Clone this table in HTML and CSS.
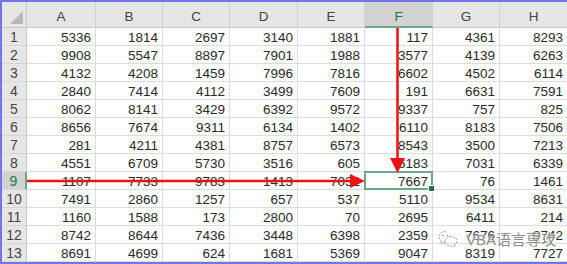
FILE: index.html
```html
<!DOCTYPE html>
<html lang="en">

<head>
    <meta charset="UTF-8">
    <meta name="viewport" content="width=device-width, initial-scale=1.0">
    <title>Sheet</title>
    <link rel="stylesheet" href="styles.css">
</head>

<body>
    <div class="frame">
        <div class="sheet">
            <!-- Column headers -->
            <div class="corner"><span class="corner-mark"></span></div>
            <div class="col-head">A</div>
            <div class="col-head">B</div>
            <div class="col-head">C</div>
            <div class="col-head">D</div>
            <div class="col-head">E</div>
            <div class="col-head active-col">F</div>
            <div class="col-head">G</div>
            <div class="col-head">H</div>

            <div class="row-head">1</div>
            <div class="cell">5336</div><div class="cell">1814</div><div class="cell">2697</div><div class="cell">3140</div><div class="cell">1881</div><div class="cell">117</div><div class="cell">4361</div><div class="cell">8293</div>

            <div class="row-head">2</div>
            <div class="cell">9908</div><div class="cell">5547</div><div class="cell">8897</div><div class="cell">7901</div><div class="cell">1988</div><div class="cell">3577</div><div class="cell">4139</div><div class="cell">6263</div>

            <div class="row-head">3</div>
            <div class="cell">4132</div><div class="cell">4208</div><div class="cell">1459</div><div class="cell">7996</div><div class="cell">7816</div><div class="cell">6602</div><div class="cell">4502</div><div class="cell">6114</div>

            <div class="row-head">4</div>
            <div class="cell">2840</div><div class="cell">7414</div><div class="cell">4112</div><div class="cell">3499</div><div class="cell">7609</div><div class="cell">191</div><div class="cell">6631</div><div class="cell">7591</div>

            <div class="row-head">5</div>
            <div class="cell">8062</div><div class="cell">8141</div><div class="cell">3429</div><div class="cell">6392</div><div class="cell">9572</div><div class="cell">9337</div><div class="cell">757</div><div class="cell">825</div>

            <div class="row-head">6</div>
            <div class="cell">8656</div><div class="cell">7674</div><div class="cell">9311</div><div class="cell">6134</div><div class="cell">1402</div><div class="cell">6110</div><div class="cell">8183</div><div class="cell">7506</div>

            <div class="row-head">7</div>
            <div class="cell">281</div><div class="cell">4211</div><div class="cell">4381</div><div class="cell">8757</div><div class="cell">6573</div><div class="cell">8543</div><div class="cell">3500</div><div class="cell">7213</div>

            <div class="row-head">8</div>
            <div class="cell">4551</div><div class="cell">6709</div><div class="cell">5730</div><div class="cell">3516</div><div class="cell">605</div><div class="cell">6183</div><div class="cell">7031</div><div class="cell">6339</div>

            <div class="row-head active-row">9</div>
            <div class="cell">1107</div><div class="cell">7733</div><div class="cell">9783</div><div class="cell">1413</div><div class="cell">7032</div><div class="cell active-cell">7667</div><div class="cell">76</div><div class="cell">1461</div>

            <div class="row-head">10</div>
            <div class="cell">7491</div><div class="cell">2860</div><div class="cell">1257</div><div class="cell">657</div><div class="cell">537</div><div class="cell">5110</div><div class="cell">9534</div><div class="cell">8631</div>

            <div class="row-head">11</div>
            <div class="cell">1160</div><div class="cell">1588</div><div class="cell">173</div><div class="cell">2800</div><div class="cell">70</div><div class="cell">2695</div><div class="cell">6411</div><div class="cell">214</div>

            <div class="row-head">12</div>
            <div class="cell">8742</div><div class="cell">8644</div><div class="cell">7436</div><div class="cell">3448</div><div class="cell">6398</div><div class="cell">2359</div><div class="cell">7676</div><div class="cell">9742</div>

            <div class="row-head">13</div>
            <div class="cell">8691</div><div class="cell">4699</div><div class="cell">624</div><div class="cell">1681</div><div class="cell">5369</div><div class="cell">9047</div><div class="cell">8319</div><div class="cell">7727</div>
        </div>

        <!-- Red arrows drawn over the sheet -->
        <svg class="arrows" width="567" height="264" viewBox="0 0 567 264">
            <line x1="397.5" y1="28" x2="397.5" y2="160" stroke="#f01010" stroke-width="2.5" />
            <polygon points="390,158 405,158 397.5,173" fill="#f01010" />
            <line x1="27" y1="181" x2="352" y2="181" stroke="#f01010" stroke-width="2.5" />
            <polygon points="350,174 350,188 365,181" fill="#f01010" />
        </svg>

        <!-- Watermark -->
        <div class="watermark">
            <svg class="wm-icon" width="20" height="18" viewBox="0 0 20 18">
                <path d="M7.5 1.5C3.9 1.5 1 3.9 1 6.9c0 1.7 0.9 3.1 2.3 4.1L2.8 13l2.3-1.2c0.8 0.2 1.5 0.3 2.4 0.3"
                    fill="none" stroke="#9a9a9a" stroke-width="1" stroke-dasharray="2 1.2" />
                <path d="M13 6.5c-3.3 0-6 2.1-6 4.8s2.7 4.8 6 4.8c0.7 0 1.3-0.1 1.9-0.3l1.9 1-0.4-1.7c1.5-0.9 2.5-2.3 2.5-3.8 0-2.7-2.7-4.8-5.9-4.8z"
                    fill="none" stroke="#9a9a9a" stroke-width="1" stroke-dasharray="2 1.2" />
                <circle cx="5" cy="5.5" r="0.8" fill="#9a9a9a" />
                <circle cx="9.5" cy="5.5" r="0.8" fill="#9a9a9a" />
            </svg>
            <span class="wm-text">VBA语言専攻</span>
        </div>
    </div>
</body>

</html>
```

FILE: styles.css
```css
/* Page frame with the blue edge of the screenshot */
body {
    margin: 0;
    background: #ffffff;
    font-family: "Liberation Sans", Arial, sans-serif;
}

.frame {
    position: relative;
    width: 567px;
    height: 264px;
    overflow: hidden;
    box-sizing: border-box;
    border-top: 2px solid #7474ec;
    border-left: 2px solid #7474ec;
    border-bottom: 2px solid #7474ec;
}

/* Spreadsheet grid */
.sheet {
    display: grid;
    grid-template-columns: 25px 69px 67px 67px 68px 67px 68px 67px 68px;
    grid-template-rows: 26px repeat(13, 18px);
    font-size: 13.5px;
}

.corner,
.col-head,
.row-head {
    background: #e6e6e6;
    color: #444;
    box-sizing: border-box;
}

.corner {
    position: relative;
    border-right: 1px solid #c8c8c8;
    border-bottom: 1px solid #c8c8c8;
}

.corner-mark {
    position: absolute;
    right: 3px;
    bottom: 3px;
    width: 0;
    height: 0;
    border-left: 13px solid transparent;
    border-bottom: 13px solid #b8b8b8;
}

.col-head {
    display: flex;
    align-items: flex-end;
    justify-content: center;
    padding-bottom: 3px;
    border-right: 1px solid #d2d2d2;
    border-bottom: 1px solid #c8c8c8;
}

.col-head.active-col {
    background: #d2d2d2;
    color: #217346;
    border-bottom: 2px solid #6ea888;
    padding-bottom: 2px;
}

.row-head {
    display: flex;
    align-items: center;
    justify-content: center;
    padding-top: 1px;
    border-right: 1px solid #c8c8c8;
    border-bottom: 1px solid #d6d6d6;
    font-size: 14px;
}

.row-head.active-row {
    background: #d2d2d2;
    color: #217346;
    border-right: 2px solid #6ea888;
}

.cell {
    display: flex;
    align-items: center;
    justify-content: flex-end;
    padding: 1px 4px 0 0;
    box-sizing: border-box;
    color: #2a2a2a;
    border-right: 1px solid #dcdcdc;
    border-bottom: 1px solid #dcdcdc;
}

.cell.active-cell {
    position: relative;
    border: 2px solid #6ea888;
    margin: -1px 0 0 -1px;
    padding-right: 3px;
}

.cell.active-cell::after {
    content: "";
    position: absolute;
    right: -4px;
    bottom: -4px;
    width: 5px;
    height: 5px;
    background: #217346;
    border: 1px solid #ffffff;
}

/* Overlays */
.arrows {
    position: absolute;
    top: -2px;
    left: -2px;
    pointer-events: none;
}

.watermark {
    position: absolute;
    left: 436px;
    top: 226px;
    display: flex;
    align-items: center;
    gap: 8px;
}

.wm-text {
    font-family: "Liberation Sans", "Noto Sans CJK SC", sans-serif;
    font-size: 15px;
    color: #8c8c8c;
    text-shadow: 0 0 2px #ffffff, 0 0 2px #ffffff;
}
```
